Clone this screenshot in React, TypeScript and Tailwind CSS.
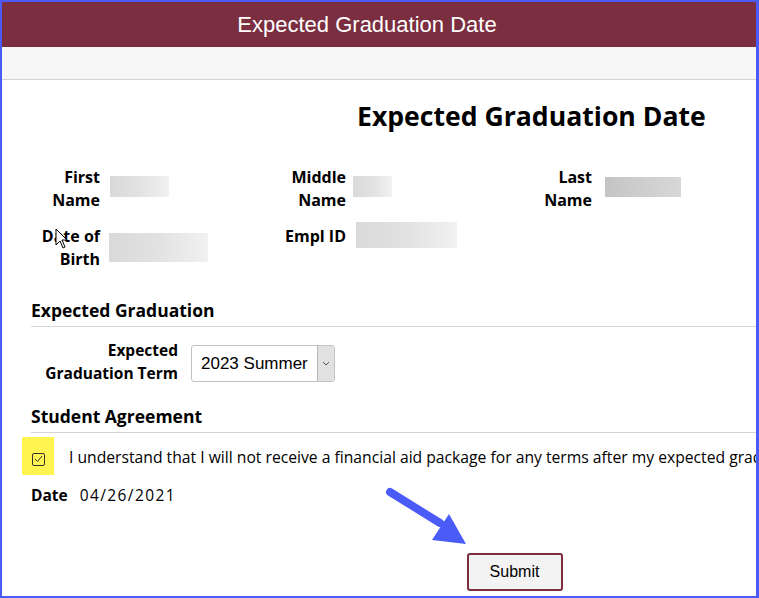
import React from "react";

const body = { fontFamily: "'Open Sans', Lato, sans-serif" };
const arial = { fontFamily: "'Liberation Sans', Arial, sans-serif" };

const Blur: React.FC<{ className: string }> = ({ className }) => (
  <div className={`shrink-0 bg-gradient-to-r from-[#d9d9d9] via-[#e2e2e2] to-[#f1f1f1] blur-[0.5px] ${className}`} />
);

const FieldCol: React.FC<{ label: string[]; children?: React.ReactNode }> = ({ label, children }) => (
  <div className="flex w-[246px] shrink-0 items-start">
    <div className="w-[70px] shrink-0 text-right text-[16px] font-bold leading-[23px] text-black">
      {label.map((l) => (
        <div key={l} className="whitespace-nowrap">
          {l}
        </div>
      ))}
    </div>
    {children}
  </div>
);

export default function App() {
  return (
    <div
      className="relative h-[598px] w-[759px] overflow-hidden border-b-2 border-l-2 border-r-[3px] border-t-2 border-[#4b5bf7] bg-white"
      style={body}
    >
      <div className="flex h-[45px] items-center justify-center bg-[#7a2e40] pr-[24px] text-[22px] text-white" style={arial}>
        Expected Graduation Date
      </div>
      <div className="h-[33px] border-b border-[#d2d2d6] bg-[#f7f7f7]" />

      <h1 className="mt-[20px] whitespace-nowrap pl-[355px] text-[26.6px] font-bold leading-[32px] text-black">
        Expected Graduation Date
      </h1>

      <div className="mt-[34px] pl-[28px]">
        <div className="flex">
          <FieldCol label={["First", "Name"]}>
            <Blur className="ml-[10px] mt-[10px] h-[21px] w-[59px]" />
          </FieldCol>
          <FieldCol label={["Middle", "Name"]}>
            <Blur className="ml-[7px] mt-[10px] h-[21px] w-[39px]" />
          </FieldCol>
          <FieldCol label={["Last", "Name"]}>
            <div className="ml-[13px] mt-[11px] h-[20px] w-[76px] shrink-0 bg-gradient-to-r from-[#c4c4c4] to-[#d8d8d8]" />
          </FieldCol>
        </div>
        <div className="mt-[13px] flex">
          <FieldCol label={["Date of", "Birth"]}>
            <Blur className="ml-[9px] mt-[8px] h-[29px] w-[99px]" />
          </FieldCol>
          <FieldCol label={["Empl ID"]}>
            <Blur className="ml-[10px] mt-[-3px] h-[26px] w-[101px]" />
          </FieldCol>
        </div>
      </div>

      <div className="ml-[29px] mt-[27px]">
        <h2 className="border-b border-[#d4d4d4] pb-[4px] text-[17.5px] font-bold leading-[24px] text-black">
          Expected Graduation
        </h2>
        <div className="mt-[12px] flex items-start">
          <div className="w-[147px] shrink-0 text-right text-[15.5px] font-bold leading-[23px] text-black">
            <div>Expected</div>
            <div className="whitespace-nowrap">Graduation Term</div>
          </div>
          <div className="ml-[13px] mt-[6px] flex h-[37px] w-[144px] shrink-0 overflow-hidden rounded-[3px] border border-[#bfc3c8] bg-white">
            <div className="flex flex-1 items-center pl-[9px] text-[17px] text-black" style={arial}>
              2023 Summer
            </div>
            <div className="flex w-[17px] items-center justify-center border-l border-[#b8b8b8] bg-[#e1e1e1]">
              <svg width="8" height="5" viewBox="0 0 8 5">
                <path d="M1 1l3 3 3-3" fill="none" stroke="#555" strokeWidth="1" />
              </svg>
            </div>
          </div>
        </div>

        <h2 className="mt-[19px] border-b border-[#d4d4d4] pb-[4px] text-[17.5px] font-bold leading-[24px] text-black">
          Student Agreement
        </h2>
        <div className="mt-[4px] flex items-center">
          <div className="ml-[-9px] flex h-[38px] w-[32px] shrink-0 items-center justify-center bg-[#fff450] pt-[6px]">
            <div className="flex h-[13px] w-[13px] items-center justify-center rounded-[2px] border border-[#333]">
              <svg width="9" height="8" viewBox="0 0 9 8">
                <path d="M1 4l2.5 2.5L8 1" fill="none" stroke="#333" strokeWidth="1" />
              </svg>
            </div>
          </div>
          <div className="ml-[15px] whitespace-nowrap pt-[3px] text-[15.7px] text-black">
            I understand that I will not receive a financial aid package for any terms after my expected grad
          </div>
        </div>
        <div className="mt-[9px] flex items-center text-[15.5px] leading-[22px] text-black">
          <span className="font-bold">Date</span>
          <span className="ml-[12px] tracking-[1.4px]">04/26/2021</span>
        </div>
      </div>

      <div className="mt-[47px] flex justify-center pl-[271px]">
        <button className="h-[38px] w-[96px] rounded-[3px] border-2 border-[#7a2e40] bg-[#f3f3f3] text-[16px] text-black" style={arial}>
          Submit
        </button>
      </div>

      {/* annotation arrow + mouse pointer */}
      <svg className="absolute" width="759" height="598" viewBox="0 0 759 598" style={{ left: -2, top: -2 }}>
        <line x1="390" y1="492" x2="440" y2="523" stroke="#4b5bf7" strokeWidth="8" strokeLinecap="round" />
        <polygon points="432,540 449,514 466,544" fill="#4b5bf7" />
        <path
          d="M56 229 L56 245 L60 241 L63 248 L65 247 L62 240 L67 240 Z"
          fill="#fff"
          stroke="#000"
          strokeWidth="1"
          strokeLinejoin="round"
        />
      </svg>
    </div>
  );
}
